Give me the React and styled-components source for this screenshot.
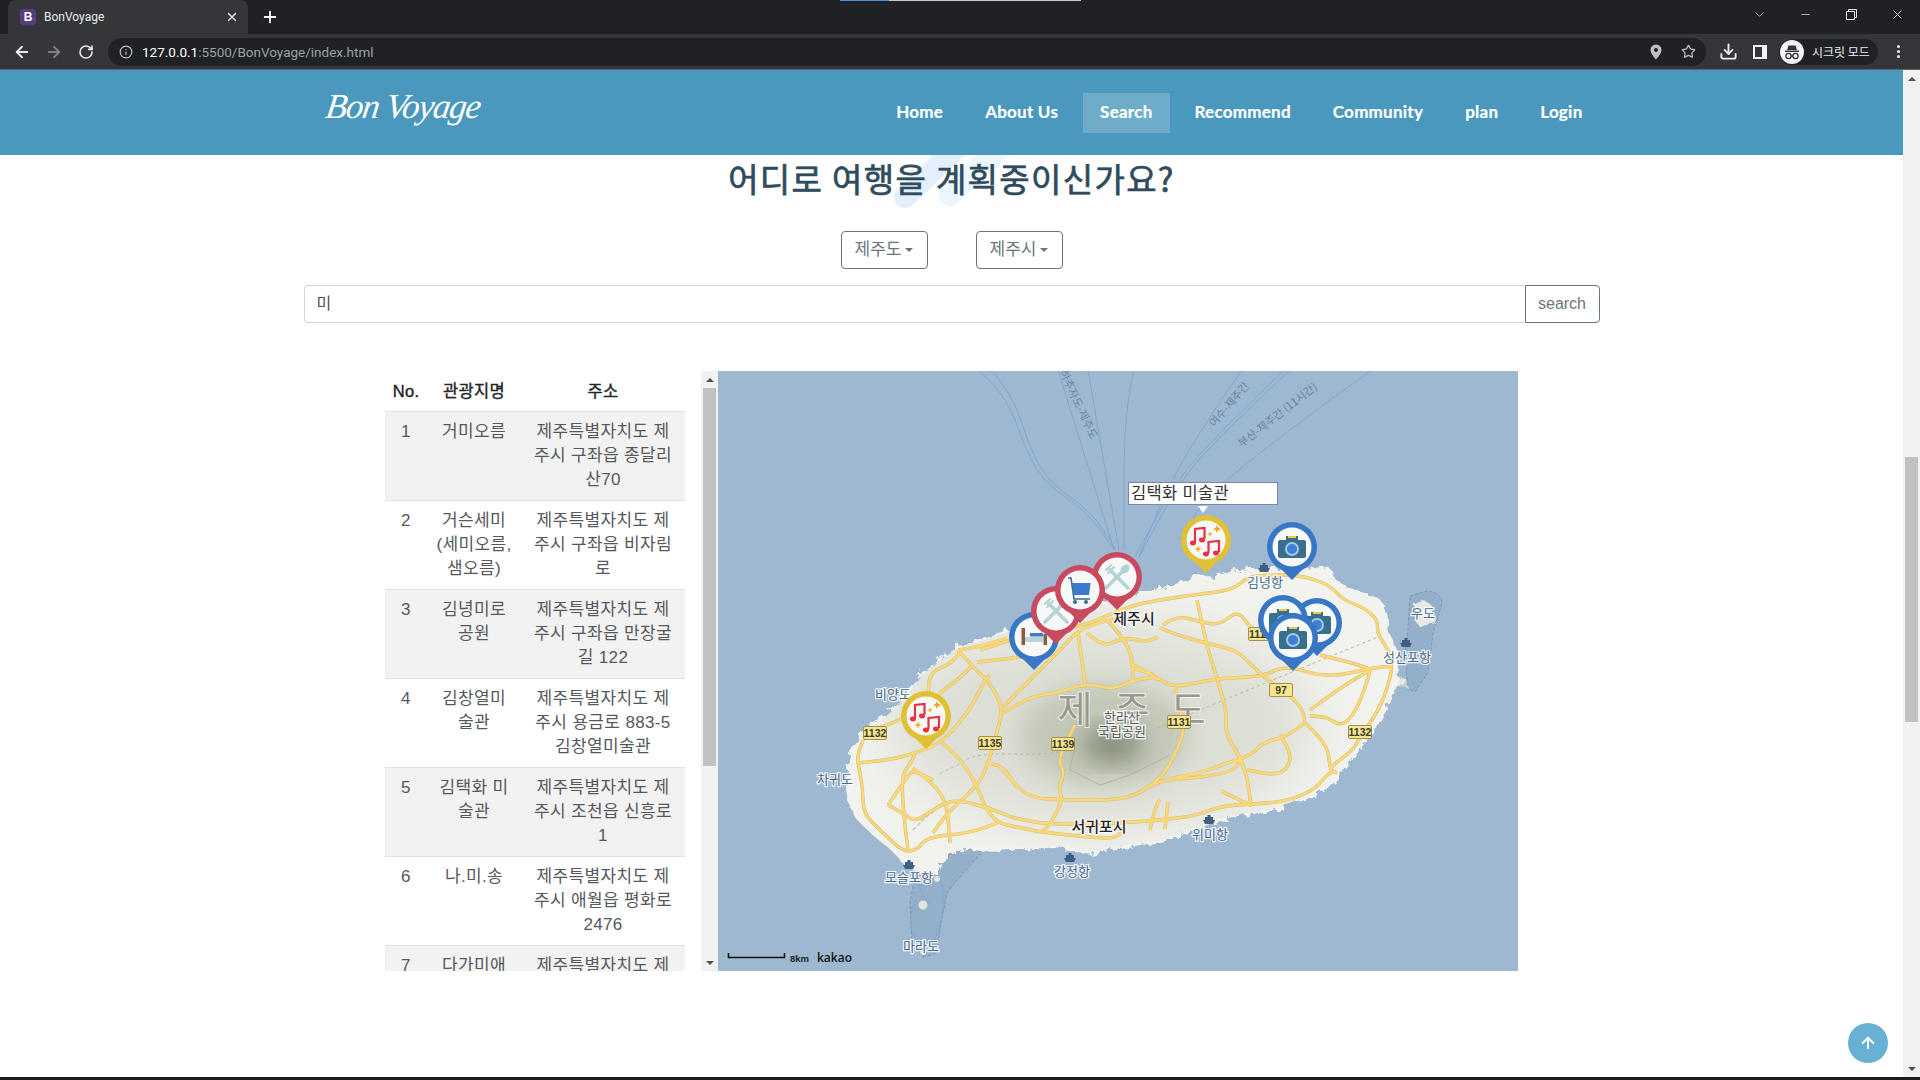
import styled, { createGlobalStyle } from 'styled-components'
import { ArrowLeft, ArrowRight, RotateCw, Info, Star, Download, ChevronDown, Minus, X, Plus, EllipsisVertical, ArrowUp } from 'lucide-react'

const GlobalStyle = createGlobalStyle`
  html, body {
    margin: 0;
    padding: 0;
    overflow: hidden;
    background: #fff;
  }
  * { box-sizing: border-box; }
`

const BODY_FONT = `"Liberation Sans", "Noto Sans CJK KR", sans-serif`

// ---- data
const NAV_ITEMS = ['Home', 'About Us', 'Search', 'Recommend', 'Community', 'plan', 'Login']

const PLACES = [
  { no: 1, name: '거미오름', addr: '제주특별자치도 제주시 구좌읍 종달리 산70' },
  { no: 2, name: '거슨세미 (세미오름, 샘오름)', addr: '제주특별자치도 제주시 구좌읍 비자림로' },
  { no: 3, name: '김녕미로공원', addr: '제주특별자치도 제주시 구좌읍 만장굴길 122' },
  { no: 4, name: '김창열미술관', addr: '제주특별자치도 제주시 용금로 883-5 김창열미술관' },
  { no: 5, name: '김택화 미술관', addr: '제주특별자치도 제주시 조천읍 신흥로 1' },
  { no: 6, name: '나.미.송', addr: '제주특별자치도 제주시 애월읍 평화로 2476' },
  { no: 7, name: '다가미애월', addr: '제주특별자치도 제주시 애월읍 애월로 1길' },
]

// map drawing, all in page coordinates (viewBox starts at 718,371)
const COAST = [847,790, 850,757, 863,730, 885,720, 905,697, 920,677, 930,668, 953,650, 977,642, 1007,632, 1050,620, 1107,603, 1157,590, 1190,583, 1197,573, 1213,582, 1233,570, 1267,570, 1313,570, 1330,568, 1333,583, 1357,593, 1380,600, 1383,610, 1388,617, 1383,627, 1393,643, 1397,670, 1393,693, 1383,713, 1370,732, 1360,747, 1343,767, 1339,776, 1318,793, 1283,806, 1252,812, 1206,822, 1170,839, 1140,843, 1107,848, 1087,853, 1063,845, 1040,848, 1017,845, 990,850, 963,845, 940,860, 938,873, 930,873, 905,865, 898,853, 873,833, 853,813]

const ROADS = [
  [980,650, 1010,640, 1040,632, 1080,627, 1113,613, 1140,603, 1193,595, 1233,590, 1247,577, 1267,575, 1300,575, 1330,585, 1343,600, 1363,607, 1378,620, 1377,633, 1387,647, 1393,665, 1387,690, 1377,713, 1360,737, 1353,750, 1333,765, 1330,770, 1337,773],
  [958,650, 980,647, 1007,638],
  [1197,600, 1202,623, 1208,650, 1217,678, 1227,713, 1225,733, 1240,757, 1247,777, 1249,790, 1251,806],
  [1160,628, 1177,635, 1202,642, 1227,648, 1240,653, 1263,677, 1290,695, 1303,710, 1305,723],
  [1163,625, 1177,615, 1200,622, 1220,625, 1238,610, 1250,628, 1260,632],
  [1130,663, 1157,678, 1175,688, 1217,678, 1263,677, 1285,665, 1327,678, 1372,668, 1392,666],
  [1320,655, 1370,667, 1370,673, 1357,710, 1342,727, 1327,717, 1310,716],
  [1310,710, 1337,690, 1370,670],
  [1305,723, 1287,737, 1263,742, 1252,755, 1227,763, 1200,773, 1163,780, 1143,790],
  [1280,735, 1292,752, 1287,770, 1273,775, 1247,770],
  [1175,688, 1185,727, 1180,743, 1170,764, 1160,779, 1129,800, 1068,800, 1027,798, 1003,770],
  [1305,723, 1327,743, 1330,767],
  [858,763, 890,760, 915,753, 942,743, 970,710, 985,680, 990,675],
  [958,650, 973,667, 990,683, 1003,707, 997,733, 985,773, 973,790, 947,813, 933,833],
  [1003,707, 1030,680, 1057,653, 1077,632, 1087,627, 1107,620, 1123,618],
  [1000,715, 1027,697, 1057,693, 1087,683, 1113,690, 1133,680, 1157,677],
  [1078,632, 1085,683],
  [960,652, 953,663, 930,672, 928,692],
  [973,665, 958,680, 943,690, 937,697],
  [977,662, 1020,658, 1040,650],
  [863,733, 883,727, 903,718],
  [858,763, 857,757, 863,740],
  [858,763, 863,787, 863,813, 880,830, 903,852, 917,850, 927,837, 970,833, 997,823],
  [942,743, 963,760, 980,793, 985,807, 997,823, 1017,827, 1040,832, 1097,838, 1117,838, 1125,828],
  [985,763, 1000,763, 1017,787],
  [915,753, 913,760, 903,773, 902,790, 905,827, 908,850],
  [913,768, 933,783, 947,803, 950,843],
  [1075,725, 1070,735, 1058,760, 1065,773, 1058,787, 1063,800, 1050,825, 1040,833],
  [1107,620, 1123,637, 1132,657, 1133,673, 1132,683],
  [1087,633, 1103,648, 1123,637, 1147,642, 1158,637],
  [1132,668, 1150,672, 1158,680],
  [888,805, 903,813, 915,822, 933,810, 945,803, 958,800, 990,808, 1017,820, 1060,825, 1120,823, 1160,820, 1195,816, 1221,806, 1252,804, 1283,802, 1313,791, 1326,776, 1334,770],
  [888,805, 907,777, 913,770, 933,780],
  [1165,780, 1231,776, 1242,756],
  [1168,802, 1165,829],
  [1221,791, 1252,806],
  [1150,830, 1155,807, 1160,800],
]

const FERRY_LINES = [
  [978,370, 1006,393, 1027,454, 1047,485, 1088,512, 1114,550],
  [991,370, 1012,393, 1032,454, 1052,485, 1092,512, 1116,550],
  [1058,370, 1088,466, 1114,550],
  [1088,370, 1119,550],
  [1134,370, 1124,408, 1124,550],
  [1242,370, 1180,458, 1139,557],
  [1290,370, 1221,435, 1180,481, 1139,557],
  [1284,370, 1217,435, 1176,481, 1135,557],
  [1372,370, 1216,481, 1180,540],
]

const TRAILS = [
  [1157,728, 1260,685, 1378,637],
  [940,773, 953,768, 977,753, 1043,755, 1070,750],
]

const SHIELDS = [
  ['1132', 875, 733], ['1135', 990, 743], ['1139', 1063, 744], ['1131', 1179, 722],
  ['97', 1281, 690], ['1132', 1360, 732], ['1112', 1260, 634],
]

const SEA_LABELS = [
  ['김녕항', 1265, 587], ['비양도', 893, 699], ['차귀도', 835, 784], ['우도', 1423, 618],
  ['성산포항', 1407, 662], ['모슬포항', 909, 882], ['마라도', 921, 951], ['강정항', 1072, 876], ['위미항', 1210, 839],
]

const PORTS = [[1264,568], [909,865], [1070,858], [1209,820], [1406,643]]

const PINS = [
  { kind: 'bed', x: 1034, y: 637 },
  { kind: 'fork', x: 1056, y: 611 },
  { kind: 'fork', x: 1117, y: 577 },
  { kind: 'cart', x: 1080, y: 590 },
  { kind: 'music', x: 1206, y: 540 },
  { kind: 'music', x: 926, y: 716 },
  { kind: 'camera', x: 1292, y: 547 },
  { kind: 'camera', x: 1317, y: 623 },
  { kind: 'camera', x: 1283, y: 620 },
  { kind: 'camera', x: 1293, y: 638 },
]

const PIN_COLOR = { bed: '#3876c6', camera: '#3876c6', fork: '#c9495f', cart: '#c9495f', music: '#e0c035' }

// rounds a point list off through the midpoints of its segments
function curve(points, closed) {
  const pts = []
  for (let i = 0; i < points.length; i += 2) pts.push([points[i], points[i + 1]])
  if (closed) {
    const mid = (a, b) => [(a[0] + b[0]) / 2, (a[1] + b[1]) / 2]
    let d = `M${mid(pts[pts.length - 1], pts[0]).join(' ')}`
    pts.forEach((p, i) => {
      d += ` Q${p.join(' ')} ${mid(p, pts[(i + 1) % pts.length]).join(' ')}`
    })
    return d + 'Z'
  }
  let d = `M${pts[0].join(' ')}`
  for (let i = 1; i < pts.length - 1; i++) {
    const mx = (pts[i][0] + pts[i + 1][0]) / 2
    const my = (pts[i][1] + pts[i + 1][1]) / 2
    d += ` Q${pts[i].join(' ')} ${mx} ${my}`
  }
  return d + ` L${pts[pts.length - 1].join(' ')}`
}

// ---- browser chrome
const Frame = styled.div`
  width: 1920px;
  height: 1080px;
  display: flex;
  flex-direction: column;
  overflow: hidden;
  position: relative;
`

const LoadLine = styled.div`
  position: absolute;
  top: 0;
  left: 840px;
  width: 241px;
  height: 1px;
  background: linear-gradient(90deg, #4a8fe0 0 49px, #c8cace 49px);
`

const TabStrip = styled.div`
  height: 34px;
  flex: none;
  background: #202124;
  display: flex;
  align-items: flex-end;
  padding-left: 8px;
`

const Tab = styled.div`
  width: 240px;
  height: 34px;
  background: #35363a;
  border-radius: 8px 8px 0 0;
  display: flex;
  align-items: center;
  padding: 0 9px 0 12px;
  color: #e8eaed;
`

const Favicon = styled.span`
  width: 16px;
  height: 16px;
  border-radius: 3px;
  background: #563d7c;
  color: #fff;
  font: 700 12px/16px "Liberation Sans", sans-serif;
  text-align: center;
  flex: none;
`

const TabTitle = styled.span`
  flex: 1;
  margin-left: 8px;
  font: 12px Roboto, sans-serif;
`

const ChromeSlot = styled.span`
  width: ${(p) => p.$w || 32}px;
  height: 28px;
  flex: none;
  display: flex;
  align-items: center;
  justify-content: center;
  color: ${(p) => p.$color || '#e8eaed'};
`

const NewTab = styled(ChromeSlot)`
  align-self: center;
  margin-left: 6px;
  color: #fff;
`

const WindowButtons = styled.div`
  margin-left: auto;
  align-self: flex-start;
  display: flex;
`

const Toolbar = styled.div`
  height: 36px;
  flex: none;
  background: #35363a;
  border-bottom: 1px solid #5f6368;
  display: flex;
  align-items: center;
  padding: 0 6px;
`

const UrlBar = styled.div`
  flex: 1;
  height: 28px;
  margin: 0 6px;
  padding: 0 2px 0 4px;
  border-radius: 14px;
  background: #202124;
  display: flex;
  align-items: center;
`

const UrlText = styled.span`
  flex: 1;
  font: 13.5px Roboto, sans-serif;
  color: #9aa0a6;
  margin-left: 2px;
  b {
    font-weight: 400;
    color: #fff;
  }
`

const IncognitoChip = styled.div`
  width: 99px;
  height: 26px;
  margin: 0 4px 0 3px;
  border-radius: 13px;
  background: #202124;
  display: flex;
  align-items: center;
  gap: 8px;
  padding-left: 1px;
  color: #e8eaed;
  font: 12px "Noto Sans CJK KR", sans-serif;
  white-space: nowrap;
`

const Viewport = styled.div`
  flex: 1;
  min-height: 0;
  display: flex;
  position: relative;
`

const Taskbar = styled.div`
  height: 3px;
  flex: none;
  background: #1c1c1e;
`

const Scrollbar = styled.div`
  width: 17px;
  flex: none;
  background: #f1f1f1;
  display: flex;
  flex-direction: column;
  align-items: center;
`

const ScrollArrow = styled.span`
  flex: none;
  height: 17px;
  display: flex;
  align-items: center;
  justify-content: center;
  &::before {
    content: '';
    border-left: 4px solid transparent;
    border-right: 4px solid transparent;
    ${(p) => (p.$down ? 'border-top: 4px solid #505050;' : 'border-bottom: 4px solid #505050;')}
  }
`

const ScrollThumb = styled.span`
  width: 13px;
  height: ${(p) => p.$h}px;
  margin-top: ${(p) => p.$top}px;
  margin-bottom: auto;
  background: #c1c1c1;
  flex: none;
`

// ---- page
const Page = styled.div`
  flex: 1;
  min-width: 0;
  display: flex;
  flex-direction: column;
  position: relative;
  background: #fff;
`

const NavBar = styled.header`
  height: 85px;
  flex: none;
  background: #4a98bd;
  display: flex;
  justify-content: center;
`

const NavInner = styled.div`
  width: 1296px;
  display: flex;
  align-items: flex-start;
`

const Logo = styled.div`
  margin: 9px 0 0 22px;
  font: italic 400 35px/56px "Liberation Serif", serif;
  color: #fff;
  letter-spacing: -1.2px;
  transform: skewX(-8deg);
  white-space: nowrap;
`

const NavList = styled.nav`
  margin: 23px 0 0 auto;
  display: flex;
`

const NavLink = styled.a`
  height: 40px;
  margin: 0 4px;
  padding: 0 17px 3px;
  display: flex;
  align-items: center;
  color: #fff;
  font: 700 17px Lato, sans-serif;
  letter-spacing: .25px;
  -webkit-text-stroke: .2px #fff;
  background: ${(p) => (p.$active ? 'rgba(255,255,255,.2)' : 'transparent')};
  &:last-child {
    margin-right: 0;
  }
`

const Content = styled.main`
  flex: 1;
  min-height: 0;
  display: flex;
  flex-direction: column;
  align-items: center;
  position: relative;
  overflow: hidden;
`

const Watermark = styled.svg`
  position: absolute;
  left: 880px;
  top: 0;
`

const Title = styled.h1`
  margin: 3px 0 0;
  position: relative;
  font: 400 33px/40px "Noto Sans CJK KR", sans-serif;
  letter-spacing: 1.35px;
  -webkit-text-stroke: .7px #2f4b5c;
  color: #2f4b5c;
`

const SelectRow = styled.div`
  margin-top: 33px;
  display: flex;
  gap: 48px;
`

const SelectButton = styled.button`
  width: 87px;
  height: 38px;
  padding: 0;
  background: #fff;
  border: 1px solid #6c757d;
  border-radius: 4px;
  color: #6c757d;
  font: 17px/24px ${BODY_FONT};
  display: flex;
  align-items: center;
  justify-content: center;
  gap: 4px;
  &::after {
    content: '';
    border-top: 4px solid #6c757d;
    border-left: 4px solid transparent;
    border-right: 4px solid transparent;
  }
`

const SearchForm = styled.form`
  margin-top: 16px;
  width: 1296px;
  height: 38px;
  flex: none;
  display: flex;
`

const SearchField = styled.div`
  flex: 1;
  border: 1px solid #ced4da;
  border-right: 0;
  border-radius: 4px 0 0 4px;
  padding: 0 12px;
  font: 16px/36px ${BODY_FONT};
  color: #495057;
`

const SearchButton = styled.button`
  width: 75px;
  background: #fff;
  border: 1px solid #6c757d;
  border-radius: 0 4px 4px 0;
  color: #6c757d;
  font: 16px "Liberation Sans", sans-serif;
`

const ResultRow = styled.section`
  margin-top: 48px;
  width: 1133px;
  height: 600px;
  flex: none;
  display: flex;
`

const TablePane = styled.div`
  width: 300px;
  height: 600px;
  overflow: hidden;
`

const PlaceTable = styled.table`
  width: 300px;
  table-layout: fixed;
  border-collapse: collapse;
  font: 17px/24px ${BODY_FONT};
  letter-spacing: .35px;
  color: #55585c;
  text-align: center;
`

const HeadCell = styled.th`
  height: 40px;
  padding: 0;
  width: ${(p) => p.$w}px;
  font-weight: 400;
  font-size: 16.5px;
  -webkit-text-stroke: .4px #212529;
  color: #212529;
`

const PlaceRow = styled.tr`
  background: ${(p) => (p.$striped ? '#f2f2f2' : '#fff')};
  border-top: 1px solid #dee2e6;
`

const PlaceCell = styled.td`
  padding: 8px;
  vertical-align: top;
`

const InnerScroll = styled(Scrollbar)`
  margin-left: 16px;
  height: 600px;
`

const MapFrame = styled.div`
  width: 800px;
  height: 600px;
  flex: none;
  position: relative;
  overflow: hidden;
  background: #9eb8d1;
`

const MapLabel = styled.text`
  font: ${(p) => (p.$big ? '500 15px' : '13px')} "Noto Sans CJK KR", sans-serif;
  fill: ${(p) => p.$fill || '#48698f'};
  stroke: rgba(255, 255, 255, .85);
  stroke-width: 2.5px;
  paint-order: stroke;
  text-anchor: middle;
`

const ShieldText = styled.text`
  font: 700 10.5px "Liberation Sans", sans-serif;
  fill: #3a3a2a;
  text-anchor: middle;
`

const MountainText = styled.text`
  font: 400 38px "Noto Sans CJK KR", sans-serif;
  fill: #98988f;
  stroke: rgba(255, 255, 255, .7);
  stroke-width: 2px;
  paint-order: stroke;
  text-anchor: middle;
`

const RouteText = styled.text`
  font: 11px "Noto Sans CJK KR", sans-serif;
  fill: #6484a6;
  text-anchor: middle;
`

const ScaleText = styled.text`
  font: 700 9.5px "Liberation Sans", sans-serif;
  fill: #222;
`

const KakaoText = styled.text`
  font: 600 12px "Open Sans", sans-serif;
  fill: #111;
`

const MarkerTip = styled.div`
  position: absolute;
  left: 410px;
  top: 111px;
  width: 150px;
  height: 23px;
  padding-left: 2px;
  background: #fff;
  border: 1px solid #7b85b0;
  color: #333;
  font: 16.5px/21px ${BODY_FONT};
  letter-spacing: .35px;
  white-space: nowrap;
  &::after {
    content: '';
    position: absolute;
    left: 69px;
    top: 23px;
    border-top: 7px solid #fff;
    border-left: 5px solid transparent;
    border-right: 5px solid transparent;
  }
`

const BackToTop = styled.a`
  position: absolute;
  right: 15px;
  bottom: 14px;
  width: 40px;
  height: 40px;
  border-radius: 50%;
  background: #68b0d4;
  color: #fff;
  display: flex;
  align-items: center;
  justify-content: center;
`

// ---- drawings
function PinIcon({ kind }) {
  if (kind === 'camera') {
    return (
      <g>
        <rect x="-14" y="-7" width="28" height="18" rx="2" fill="#386f8c" />
        <rect x="-6" y="-11" width="12" height="5" fill="#386f8c" />
        <rect x="-4" y="-11" width="8" height="2" fill="#f3c93b" />
        <circle cy="2" r="7" fill="#a6c9e0" />
        <circle cy="2" r="5" fill="#3f7fd8" />
      </g>
    )
  }
  if (kind === 'music') {
    return (
      <g fill="none" stroke="#e53340" strokeWidth="2.2">
        <path d="M-11 2V-11L-1.5 -12V-1" />
        <path d="M2.5 13V2L13 1V12" />
        <g fill="#e53340" stroke="none">
          <ellipse cx="-13" cy="3" rx="3" ry="2.4" />
          <ellipse cx="-4" cy="0" rx="3" ry="2.4" />
          <ellipse cx="0" cy="14" rx="3" ry="2.4" />
          <ellipse cx="10" cy="13" rx="3" ry="2.4" />
        </g>
        <g fill="#f5a623" stroke="none">
          <path d="M11 -15L12.2 -12.2L15 -11L12.2 -9.8L11 -7L9.8 -9.8L7 -11L9.8 -12.2Z" />
          <path d="M4 -8.5L4.8 -6.8L6.5 -6L4.8 -5.2L4 -3.5L3.2 -5.2L1.5 -6L3.2 -6.8Z" />
          <path d="M-8 5.5L-7 8L-4.5 9L-7 10L-8 12.5L-9 10L-11.5 9L-9 8Z" />
        </g>
      </g>
    )
  }
  if (kind === 'fork') {
    return (
      <g stroke="#b5d3d3" strokeWidth="3.6" strokeLinecap="round" fill="#b5d3d3">
        <path d="M-11 11L7 -7" />
        <path d="M11 11L-7 -7" />
        <path d="M-6 -12L-11 -7M-3 -10L-9 -4" strokeWidth="2" />
        <ellipse cx="8" cy="-8" rx="3.8" ry="5.4" transform="rotate(45 8 -8)" stroke="none" />
      </g>
    )
  }
  if (kind === 'cart') {
    return (
      <g>
        <path d="M-8 -7H10.6L9 5H-6Z" fill="#3f79cf" />
        <path d="M-12 -12H-9L-6 9H10" fill="none" stroke="#386f8c" strokeWidth="1.6" />
        <circle cx="-5" cy="12" r="2" fill="#386f8c" />
        <circle cx="6" cy="12" r="2" fill="#386f8c" />
      </g>
    )
  }
  return (
    <g>
      <rect x="-9" y="0" width="18" height="5" fill="#b7d6d6" />
      <rect x="-4" y="-4" width="13" height="3.5" fill="#3f79cf" />
      <rect x="-12.5" y="-9" width="3.5" height="17" fill="#8a5a44" />
      <rect x="9.5" y="-3" width="3.5" height="11" fill="#8a5a44" />
    </g>
  )
}

function MapPin({ kind, x, y }) {
  const color = PIN_COLOR[kind]
  return (
    <g transform={`translate(${x} ${y})`}>
      <path d="M-12 21L0 33L12 21Z" fill={color} />
      <circle r="25" fill={color} />
      <circle r="19.5" fill="#f7f8f8" />
      <PinIcon kind={kind} />
    </g>
  )
}

function JejuMap() {
  const coast = curve(COAST, true)
  return (
    <svg width="800" height="600" viewBox="718 371 800 600">
      <defs>
        <filter id="rough" x="-5%" y="-5%" width="110%" height="110%">
          <feTurbulence type="fractalNoise" baseFrequency="0.13" numOctaves="3" seed="4" />
          <feDisplacementMap in="SourceGraphic" scale="10" />
        </filter>
        <filter id="soft" x="-30%" y="-30%" width="160%" height="160%">
          <feGaussianBlur stdDeviation="12" />
        </filter>
        <filter id="softer" x="-30%" y="-30%" width="160%" height="160%">
          <feGaussianBlur stdDeviation="28" />
        </filter>
        <clipPath id="land">
          <path d={coast} />
        </clipPath>
      </defs>

      {FERRY_LINES.map((line) => (
        <path key={line.join()} d={curve(line)} fill="none" stroke="#7fa7d1" strokeWidth="1" />
      ))}

      <path d="M1410 596L1426 591Q1442 592 1442 603L1433 634L1428 672L1416 691L1408 690L1405 653L1408 630Z" fill="#93afca" stroke="#7d95ad" strokeWidth="1" strokeDasharray="3 2" />
      <path d="M940 860L963 845L987 847L963 873L947 893L940 930L937 953L923 957L912 943L910 903L913 887L913 873L938 873Z" fill="#93afca" stroke="#7d95ad" strokeWidth="1" strokeDasharray="3 2" />
      <path d="M913 873Q925 900 930 905M936 875Q950 890 940 925Q932 950 925 955M925 955Q905 930 912 908Q918 900 925 903" fill="none" stroke="#7fa7d1" strokeWidth="1" />

      <path d="M1415 604L1424 600L1432 606L1434 622L1420 627L1413 618Z" fill="#e8e9e2" filter="url(#rough)" />
      <path d="M1393 676L1405 678L1408 688L1396 684Z" fill="#e8e9e2" filter="url(#rough)" />
      <circle cx="923" cy="905" r="4.5" fill="#e2e3db" />
      <circle cx="937" cy="879" r="3" fill="#e2e3db" />
      <circle cx="923" cy="952" r="3" fill="#e2e3db" />

      <path d={coast} fill="#f2f3ee" stroke="#f2f3ee" strokeWidth="4" filter="url(#rough)" />
      <g clipPath="url(#land)">
        <ellipse cx="1100" cy="725" rx="215" ry="105" fill="#dddfd5" filter="url(#softer)" />
        <ellipse cx="1105" cy="735" rx="85" ry="52" fill="#c2c7b7" filter="url(#soft)" />
        <ellipse cx="1112" cy="745" rx="30" ry="18" fill="#858c78" filter="url(#soft)" />
        <path d="M1075 745L1070 770L1100 785L1130 775L1170 755" fill="none" stroke="#a9ae9d" strokeWidth=".8" />
      </g>

      {TRAILS.map((line) => (
        <path key={line.join()} d={curve(line)} fill="none" stroke="#b5b59c" strokeWidth="1" strokeDasharray="3 3" />
      ))}
      <path d="M913 830L925 818L941 805" fill="none" stroke="#cfcfc8" strokeWidth="2" strokeDasharray="4 2" />

      {ROADS.map((road) => (
        <path key={road.join()} d={curve(road)} fill="none" stroke="#d6bb78" strokeWidth="3.4" strokeLinejoin="round" />
      ))}
      {ROADS.map((road) => (
        <path key={road.join()} d={curve(road)} fill="none" stroke="#fbd976" strokeWidth="2.4" strokeLinejoin="round" />
      ))}

      {PORTS.map(([x, y]) => (
        <path key={x} transform={`translate(${x} ${y})`} d="M-1.5 -5H1.5V-3H4V0H6L4 4H-4L-6 0H-4V-3H-1.5Z" fill="#3f5f80" />
      ))}

      <MountainText x="1075" y="723">제</MountainText>
      <MountainText x="1132" y="723">주</MountainText>
      <MountainText x="1188" y="723">도</MountainText>
      <MapLabel x="1122" y="722" $fill="#55595a">한라산</MapLabel>
      <MapLabel x="1122" y="736" $fill="#55595a">국립공원</MapLabel>

      {SEA_LABELS.map(([text, x, y]) => (
        <MapLabel key={text} x={x} y={y}>{text}</MapLabel>
      ))}
      <MapLabel x="1134" y="624" $big $fill="#222">제주시</MapLabel>
      <MapLabel x="1099" y="832" $big $fill="#222">서귀포시</MapLabel>

      <RouteText transform="translate(1232 407) rotate(-49)">여수-제주간</RouteText>
      <RouteText transform="translate(1280 418) rotate(-38)">부산-제주간 (11시간)</RouteText>
      <RouteText transform="translate(1075 406) rotate(65)">하추자도-제주도</RouteText>

      {SHIELDS.map(([text, x, y]) => (
        <g key={`${text}${x}`}>
          <rect x={x - 11.5} y={y - 6.5} width="23" height="13" rx="1.5" fill="#f7e690" stroke="#a58f4a" />
          <ShieldText x={x} y={y + 4}>{text}</ShieldText>
        </g>
      ))}

      {PINS.map((pin) => (
        <MapPin key={`${pin.x}${pin.y}`} {...pin} />
      ))}

      <path d="M728.5 953V957.5H784.5V953" fill="none" stroke="#111" strokeWidth="1.6" />
      <ScaleText x="790" y="962">8km</ScaleText>
      <KakaoText x="817" y="962">kakao</KakaoText>
    </svg>
  )
}

function IncognitoIcon() {
  return (
    <svg width="24" height="24" viewBox="0 0 24 24">
      <circle cx="12" cy="12" r="12" fill="#f1f3f4" />
      <path d="M8.5 5.5H15.5L17 10H7Z M5 10.5H19V12H5Z" fill="#35363a" />
      <circle cx="8.5" cy="16" r="2.6" fill="none" stroke="#35363a" strokeWidth="1.3" />
      <circle cx="15.5" cy="16" r="2.6" fill="none" stroke="#35363a" strokeWidth="1.3" />
      <path d="M11 16H13" stroke="#35363a" strokeWidth="1.3" />
    </svg>
  )
}

function App() {
  return (
    <Frame>
      <GlobalStyle />
      <LoadLine />
      <TabStrip>
        <Tab>
          <Favicon>B</Favicon>
          <TabTitle>BonVoyage</TabTitle>
          <X size={14} strokeWidth={2.4} />
        </Tab>
        <NewTab><Plus size={18} strokeWidth={2.4} /></NewTab>
        <WindowButtons>
          <ChromeSlot $w={46} $color="#c4c7ca"><ChevronDown size={15} strokeWidth={1.3} /></ChromeSlot>
          <ChromeSlot $w={46}><Minus size={13} strokeWidth={1.3} /></ChromeSlot>
          <ChromeSlot $w={46}>
            <svg width="11" height="11" viewBox="0 0 11 11" fill="none" stroke="#e8eaed">
              <path d="M.5 2.5H8.5V10.5H.5Z M2.5 2.5V.5H10.5V8.5H8.5" />
            </svg>
          </ChromeSlot>
          <ChromeSlot $w={46}><X size={15} strokeWidth={1.3} /></ChromeSlot>
        </WindowButtons>
      </TabStrip>

      <Toolbar>
        <ChromeSlot><ArrowLeft size={18} strokeWidth={2.4} /></ChromeSlot>
        <ChromeSlot $color="#7d8084"><ArrowRight size={18} strokeWidth={2.4} /></ChromeSlot>
        <ChromeSlot><RotateCw size={16} strokeWidth={2.4} /></ChromeSlot>
        <UrlBar>
          <ChromeSlot $w={28} $color="#bdc1c6"><Info size={14} /></ChromeSlot>
          <UrlText><b>127.0.0.1</b>:5500/BonVoyage/index.html</UrlText>
          <ChromeSlot $color="#bdc1c6">
            <svg width="14" height="16" viewBox="0 0 14 16">
              <path fillRule="evenodd" d="M7 0.5A5.5 5.5 0 0 1 12.5 6C12.5 10 7 15.5 7 15.5S1.5 10 1.5 6A5.5 5.5 0 0 1 7 0.5ZM7 4A2 2 0 1 0 7 8A2 2 0 1 0 7 4Z" fill="#bdc1c6" />
            </svg>
          </ChromeSlot>
          <ChromeSlot $color="#bdc1c6"><Star size={15} /></ChromeSlot>
        </UrlBar>
        <ChromeSlot><Download size={19} strokeWidth={2.4} /></ChromeSlot>
        <ChromeSlot>
          <svg width="14" height="14" viewBox="0 0 14 14">
            <path fillRule="evenodd" d="M0 0H14V14H0ZM2 2V12H9V2Z" fill="#f1f3f4" />
          </svg>
        </ChromeSlot>
        <IncognitoChip>
          <IncognitoIcon />
          <span>시크릿 모드</span>
        </IncognitoChip>
        <ChromeSlot><EllipsisVertical size={17} strokeWidth={2.4} /></ChromeSlot>
      </Toolbar>

      <Viewport>
        <Page>
          <NavBar>
            <NavInner>
              <Logo>Bon Voyage</Logo>
              <NavList>
                {NAV_ITEMS.map((item) => (
                  <NavLink key={item} $active={item === 'Search'}>{item}</NavLink>
                ))}
              </NavList>
            </NavInner>
          </NavBar>

          <Content>
            <Watermark width="150" height="70" viewBox="880 155 150 70">
              <path d="M905 197L965 140" stroke="#e4effc" strokeWidth="22" strokeLinecap="round" />
              <path d="M950 195L1015 135" stroke="#ecf6fe" strokeWidth="22" strokeLinecap="round" />
            </Watermark>
            <Title>어디로 여행을 계획중이신가요?</Title>
            <SelectRow>
              <SelectButton>제주도</SelectButton>
              <SelectButton>제주시</SelectButton>
            </SelectRow>
            <SearchForm>
              <SearchField>미</SearchField>
              <SearchButton>search</SearchButton>
            </SearchForm>
            <ResultRow>
              <TablePane>
                <PlaceTable>
                  <thead>
                    <tr>
                      <HeadCell $w={42}>No.</HeadCell>
                      <HeadCell $w={94}>관광지명</HeadCell>
                      <HeadCell $w={164}>주소</HeadCell>
                    </tr>
                  </thead>
                  <tbody>
                    {PLACES.map((place) => (
                      <PlaceRow key={place.no} $striped={place.no % 2 === 1}>
                        <PlaceCell>{place.no}</PlaceCell>
                        <PlaceCell>{place.name}</PlaceCell>
                        <PlaceCell>{place.addr}</PlaceCell>
                      </PlaceRow>
                    ))}
                  </tbody>
                </PlaceTable>
              </TablePane>
              <InnerScroll>
                <ScrollArrow />
                <ScrollThumb $h={378} $top={0} />
                <ScrollArrow $down />
              </InnerScroll>
              <MapFrame>
                <JejuMap />
                <MarkerTip>김택화 미술관</MarkerTip>
              </MapFrame>
            </ResultRow>
          </Content>
          <BackToTop><ArrowUp size={18} strokeWidth={2.6} /></BackToTop>
        </Page>
        <Scrollbar>
          <ScrollArrow />
          <ScrollThumb $h={265} $top={370} />
          <ScrollArrow $down />
        </Scrollbar>
      </Viewport>
      <Taskbar />
    </Frame>
  )
}

export default App
